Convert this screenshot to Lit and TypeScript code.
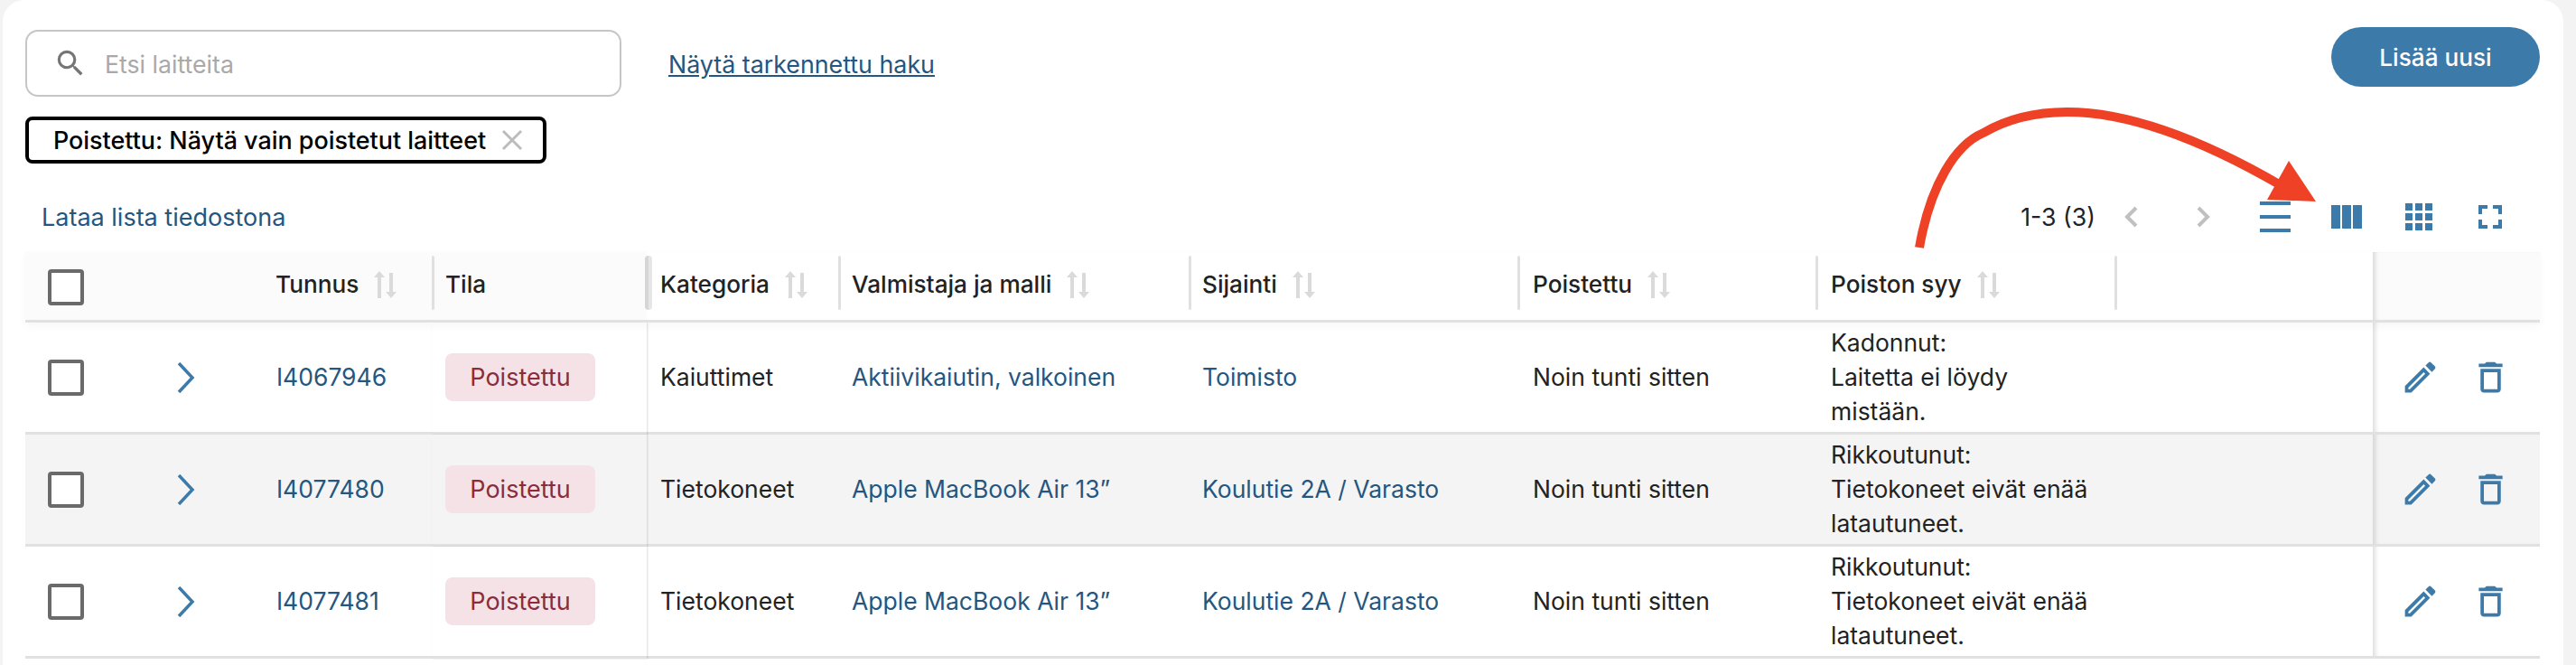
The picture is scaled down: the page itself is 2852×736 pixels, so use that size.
import { LitElement, html, css, svg } from "lit";
import { customElement } from "lit/decorators.js";

const columns = [
  { label: "Tunnus", sort: true },
  { label: "Tila", sort: false, sep: true },
  { label: "Kategoria", sort: true, sep: true, thick: true },
  { label: "Valmistaja ja malli", sort: true, sep: true },
  { label: "Sijainti", sort: true, sep: true },
  { label: "Poistettu", sort: true, sep: true },
  { label: "Poiston syy", sort: true, sep: true },
];

const rows = [
  {
    id: "I4067946",
    category: "Kaiuttimet",
    model: "Aktiivikaiutin, valkoinen",
    place: "Toimisto",
    reason: ["Kadonnut:", "Laitetta ei löydy", "mistään."],
  },
  {
    id: "I4077480",
    category: "Tietokoneet",
    model: "Apple MacBook Air 13”",
    place: "Koulutie 2A / Varasto",
    reason: ["Rikkoutunut:", "Tietokoneet eivät enää", "latautuneet."],
  },
  {
    id: "I4077481",
    category: "Tietokoneet",
    model: "Apple MacBook Air 13”",
    place: "Koulutie 2A / Varasto",
    reason: ["Rikkoutunut:", "Tietokoneet eivät enää", "latautuneet."],
  },
];

const sortIcon = html`<svg class="sort" width="26" height="30" viewBox="0 0 26 30" fill="#dadada">
  <path d="M6 0 L12 7 H8 V30 H4 V7 H0 Z"></path>
  <path d="M19 30 L25 23 H21 V2 H17 V23 H13 Z"></path>
</svg>`;

const editIcon = svg`<path d="M3 17.25V21h3.75L17.81 9.94l-3.75-3.75L3 17.25zM5.92 19H5v-.92l9.06-9.06.92.92L5.92 19zM20.71 5.63l-2.34-2.34c-.39-.39-1.02-.39-1.41 0l-1.83 1.83 3.75 3.75 1.83-1.83c.39-.39.39-1.02 0-1.41z"></path>`;
const trashIcon = svg`<path d="M16 9v10H8V9h8m-1.5-6h-5l-1 1H5v2h14V4h-3.5l-1-1zM18 7H6v12c0 1.1.9 2 2 2h8c1.1 0 2-.9 2-2V7z"></path>`;

@customElement("app-root")
export class AppRoot extends LitElement {
  static styles = css`
    :host {
      display: block;
      position: relative;
      width: 2852px;
      height: 736px;
      overflow: hidden;
      background: #f3f3f3;
      font-family: Inter, "Liberation Sans", sans-serif;
      font-size: 26.7px;
      color: #222;
    }
    .card {
      margin-left: 3px;
      width: 2835px;
      height: 736px;
      box-sizing: border-box;
      padding: 30px 26px 0 25px;
      background: #fff;
      border-radius: 24px 24px 0 0;
    }
    .top {
      display: flex;
      justify-content: space-between;
      align-items: flex-start;
    }
    .search-group {
      display: flex;
      align-items: center;
      gap: 52px;
      margin-top: 3px;
    }
    .search {
      width: 660px;
      height: 74px;
      box-sizing: border-box;
      display: flex;
      align-items: center;
      gap: 19px;
      padding-left: 29px;
      border: 2px solid #c6c6c6;
      border-radius: 14px;
      color: #a9a9a9;
    }
    .search span,
    .adv {
      padding-top: 2px;
    }
    .search svg {
      fill: #757575;
    }
    a {
      color: #25567f;
      text-decoration: none;
    }
    .adv {
      text-decoration: underline;
      font-size: 26.8px;
    }
    .add {
      width: 231px;
      height: 66px;
      border: 0;
      border-radius: 33px;
      background: #3c7aa9;
      color: #fff;
      font: 500 26.2px Inter, sans-serif;
    }
    .chip {
      display: inline-flex;
      align-items: center;
      box-sizing: border-box;
      width: 577px;
      height: 52px;
      margin-top: 22px;
      padding-left: 27px;
      gap: 17px;
      border: 4px solid #000;
      border-radius: 8px;
      color: #000;
      font-weight: 500;
      font-size: 26.9px;
      white-space: nowrap;
    }
    .chip svg {
      stroke: #bcbcbc;
      flex: none;
    }
    .toolbar {
      display: flex;
      justify-content: space-between;
      align-items: center;
      height: 58px;
      margin: 30px 0 10px;
      padding: 0 15px 0 18px;
    }
    .toolbar > a {
      font-size: 27px;
    }
    .pager {
      display: flex;
      align-items: center;
    }
    .tool {
      width: 79.5px;
      display: flex;
      justify-content: center;
    }
    .tool svg {
      display: block;
    }
    .blue {
      fill: #3c7aa9;
    }
    .chev {
      fill: none;
      stroke: #c0c0c0;
      stroke-width: 4;
    }
    .grid {
      display: grid;
      grid-template-columns: 140px 123px 187px 238px 212px 388px 364px 330px 331px 286px 185px;
    }
    .head {
      height: 78px;
      position: relative;
      z-index: 2;
      box-shadow: 0 4px 10px rgba(0, 0, 0, 0.035);
    }
    .row {
      height: 124px;
      font-size: 26.5px;
    }
    .row.alt {
      background: #f4f4f4;
    }
    .cell {
      display: flex;
      align-items: center;
      box-sizing: border-box;
      position: relative;
      padding-left: 15px;
      border-bottom: 3px solid #e1e1e1;
      white-space: nowrap;
    }
    .row .cell {
      padding-bottom: 2px;
    }
    .grid .cell:nth-child(8),
    .grid .cell:nth-child(9) {
      padding-left: 17px;
    }
    .row .cell.pin {
      background: #fff;
    }
    .row.alt .cell.pin {
      background: #f4f4f4;
    }
    .head .cell {
      font-weight: 500;
      font-size: 26.2px;
      padding-bottom: 4px;
      gap: 17px;
      background: #fff;
    }
    .head .cell:nth-child(3) {
      padding-left: 14px;
    }
    .head .cell.pin {
      background: #fbfbfb;
    }
    .head .cell.sep::before {
      content: "";
      position: absolute;
      left: 0;
      top: 4px;
      height: 60px;
      width: 3px;
      border-radius: 2px;
      background: #e0e0e0;
    }
    .head .cell.thick::before {
      left: -2px;
      width: 8px;
      border-radius: 4px;
      background: linear-gradient(90deg, #d6d6d6 50%, #e6e6e6 50%);
    }
    .shadow-left {
      z-index: 1;
      box-shadow: 1px 0 2px rgba(0, 0, 0, 0.14);
    }
    .row .cell.shadow-right,
    .head .cell.shadow-right {
      box-shadow: inset 6px 0 5px -3px rgba(0, 0, 0, 0.13);
    }
    .row .cell.check-cell,
    .head .cell.check-cell {
      padding-left: 25px;
      padding-bottom: 0;
    }
    .head .check {
      margin-top: 2px;
    }
    .check {
      width: 40px;
      height: 40px;
      box-sizing: border-box;
      border: 4px solid #6a6a6a;
      border-radius: 4px;
      background: #fff;
    }
    .row .cell.expand {
      padding-left: 28px;
      padding-bottom: 0;
    }
    .expand svg {
      fill: none;
      stroke: #3c7aa9;
      stroke-width: 3.5;
    }
    .badge {
      display: flex;
      align-items: center;
      justify-content: center;
      width: 166px;
      height: 53px;
      border-radius: 8px;
      background: #f5e2e6;
      color: #8b2b3c;
      font-size: 27px;
    }
    .row .cell.badge-cell {
      padding-bottom: 0;
    }
    .reason {
      flex-direction: column;
      align-items: flex-start;
      justify-content: center;
    }
    .reason div {
      height: 38px;
      line-height: 38px;
    }
    .row .cell.actions {
      padding-left: 30px;
      padding-bottom: 0;
      gap: 33px;
    }
    .actions svg {
      fill: #3c7aa9;
      display: block;
    }
    .arrow {
      position: absolute;
      left: 0;
      top: 0;
      z-index: 5;
      pointer-events: none;
    }
  `;

  render() {
    return html`
      <div class="card">
        <div class="top">
          <div class="search-group">
            <div class="search">
              <svg width="38" height="38" viewBox="0 0 24 24"><path d="M15.5 14h-.79l-.28-.27A6.47 6.47 0 0 0 16 9.5 6.5 6.5 0 1 0 9.5 16c1.61 0 3.09-.59 4.23-1.57l.27.28v.79l5 4.99L20.49 19l-4.99-5zm-6 0C7.01 14 5 11.99 5 9.5S7.01 5 9.5 5 14 7.01 14 9.5 11.99 14 9.5 14z"></path></svg>
              <span>Etsi laitteita</span>
            </div>
            <a class="adv" href="#">Näytä tarkennettu haku</a>
          </div>
          <button class="add">Lisää uusi</button>
        </div>
        <div class="chip">
          <span>Poistettu: Näytä vain poistetut laitteet</span>
          <svg width="24" height="24" viewBox="0 0 24 24" fill="none" stroke-width="3"><path d="M2 2 L22 22 M22 2 L2 22"></path></svg>
        </div>
        <div class="toolbar">
          <a href="#">Lataa lista tiedostona</a>
          <div class="pager">
            <span>1-3 (3)</span>
            <div class="tool"><svg class="chev" width="16" height="24" viewBox="0 0 16 24"><path d="M13 2 L3 12 L13 22"></path></svg></div>
            <div class="tool"><svg class="chev" width="16" height="24" viewBox="0 0 16 24"><path d="M3 2 L13 12 L3 22"></path></svg></div>
            <div class="tool">
              <svg class="blue" width="34" height="34" viewBox="0 0 34 34"><rect y="0" width="34" height="4"></rect><rect y="15" width="34" height="4"></rect><rect y="30" width="34" height="4"></rect></svg>
            </div>
            <div class="tool">
              <svg class="blue" width="34" height="26" viewBox="0 0 34 26"><rect width="10" height="26"></rect><rect x="12" width="10" height="26"></rect><rect x="24" width="10" height="26"></rect></svg>
            </div>
            <div class="tool">
              <svg class="blue" width="30" height="30" viewBox="0 0 30 30">
                ${[0, 11, 22].map((y) =>
                  [0, 11, 22].map((x) => svg`<rect x=${x} y=${y} width="8" height="8"></rect>`)
                )}
              </svg>
            </div>
            <div class="tool">
              <svg class="blue" width="26" height="26" viewBox="0 0 26 26"><path d="M0 0H10V4H4V10H0ZM16 0H26V10H22V4H16ZM0 16H4V22H10V26H0ZM22 16H26V26H16V22H22Z"></path></svg>
            </div>
          </div>
        </div>

        <div class="grid head">
          <div class="cell pin check-cell"><div class="check"></div></div>
          <div class="cell pin"></div>
          ${columns.map(
            (c, i) => html`<div class="cell ${i < 2 ? "pin" : ""} ${c.sep ? "sep" : ""} ${c.thick ? "thick" : ""}">
              <span>${c.label}</span>${c.sort ? sortIcon : ""}
            </div>`
          )}
          <div class="cell sep"></div>
          <div class="cell pin shadow-right"></div>
        </div>

        ${rows.map(
          (r, i) => html`<div class="grid row ${i === 1 ? "alt" : ""}">
            <div class="cell pin check-cell"><div class="check"></div></div>
            <div class="cell pin expand">
              <svg width="20" height="34" viewBox="0 0 20 34"><path d="M2 1 L17 17 L2 33"></path></svg>
            </div>
            <div class="cell pin"><a href="#">${r.id}</a></div>
            <div class="cell pin badge-cell shadow-left"><div class="badge">Poistettu</div></div>
            <div class="cell">${r.category}</div>
            <div class="cell"><a href="#">${r.model}</a></div>
            <div class="cell"><a href="#">${r.place}</a></div>
            <div class="cell">Noin tunti sitten</div>
            <div class="cell reason">${r.reason.map((t) => html`<div>${t}</div>`)}</div>
            <div class="cell"></div>
            <div class="cell pin actions shadow-right">
              <svg width="45" height="45" viewBox="0 0 24 24">${editIcon}</svg>
              <svg width="45" height="45" viewBox="0 0 24 24">${trashIcon}</svg>
            </div>
          </div>`
        )}
      </div>

      <svg class="arrow" width="2852" height="736" viewBox="0 0 2852 736">
        <path d="M2125 274 C2137 205 2165 160 2196 147 C2225 130 2260 124 2289 124 C2350 124 2430 150 2525 205" fill="none" stroke="#ee4125" stroke-width="10"></path>
        <path d="M2534 178 L2564 223 L2510 221 Z" fill="#ee4125"></path>
      </svg>
    `;
  }
}
